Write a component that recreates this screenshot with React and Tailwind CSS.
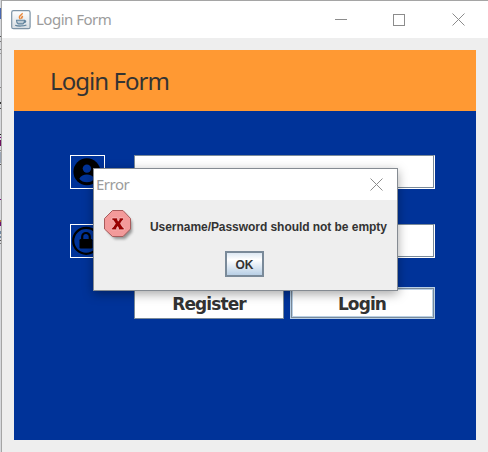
import React from "react";

const Cross = () => (
  <svg width="13" height="13" viewBox="0 0 13 13" className="block">
    <path d="M.5 .5l12 12M12.5 .5l-12 12" stroke="#8c8c8c" strokeWidth="1" fill="none" />
  </svg>
);

const JavaIcon = () => (
  <svg width="20" height="20" viewBox="0 0 20 20" className="block">
    <defs>
      <linearGradient id="tile" x1="0" y1="0" x2="0" y2="1">
        <stop offset="0" stopColor="#fff" />
        <stop offset="1" stopColor="#d5dce2" />
      </linearGradient>
    </defs>
    <rect x=".7" y=".7" width="18.4" height="18" rx="1.8" fill="url(#tile)" stroke="#7d93a5" strokeWidth="1.2" />
    <path d="M11.2 3c.4 2-3.200 2.400-2.800 4.400.1.700.8 1.100 1 1.900M12 6.200c-1.400.6-1.600 1.400-1.100 2.600" stroke="#e8883c" strokeWidth="1.500" fill="none" />
    <path d="M5.500 10.300h8c0 1.600-.6 3.200-1.500 3.600H7.300c-1.100-.6-1.800-2-1.800-3.600zM13.300 10.600c2-.4 2.100 1.800-.6 2.300M4.200 15.200c2.400 1.200 8.500 1.200 11.200-.2" stroke="#5f829b" strokeWidth="1.100" fill="#a3b8c7" fillOpacity=".6" />
  </svg>
);

const UserIcon = () => (
  <svg width="33" height="32" viewBox="0 0 33 32" className="block">
    <circle cx="15.900" cy="15.800" r="13.500" fill="#000" />
    <circle cx="15.900" cy="12.600" r="4.200" fill="#003399" />
    <path d="M8.300 22.700c1.500-3 4.500-4.200 7.600-4.200s6.100 1.200 7.600 4.200c-1.700 2.300-4.500 3.600-7.600 3.600s-5.900-1.300-7.600-3.600z" fill="#003399" />
  </svg>
);

const LockIcon = () => (
  <svg width="33" height="32" viewBox="0 0 33 32" className="block">
    <circle cx="15.200" cy="15.800" r="13" fill="none" stroke="#000" strokeWidth="2.200" />
    <rect x="8.500" y="14" width="13" height="9.500" rx="1.200" fill="#000" />
    <path d="M11.200 14.500v-2.700a3.800 3.800 0 0 1 7.600 0v2.700" fill="none" stroke="#000" strokeWidth="2.200" />
  </svg>
);

const Field = () => (
  <div className="h-[34px] w-[301px] border border-t-[#7a8a99] border-l-[#7a8a99] border-r-white border-b-white">
    <div className="h-full border-r border-b border-[#7a8a99] bg-white" />
  </div>
);

const ErrorIcon = () => (
  <svg width="36" height="36" viewBox="0 0 36 36" className="block">
    <path d="M11 5h11l7 8v10l-7 7H12l-7-7z" fill="#000" opacity=".4" className="blur-[1.5px]" />
    <path d="M9.500 1.500h10.500l7.500 8v10.500l-7.500 7.500H9.500l-8-7.500V9.500z" fill="#f39a9a" stroke="#a85c5c" />
    <path d="M9 9h5.500v1.800l.8 1.400.9-1.400V9H20.500v2.300h-1l-2.100 3.200 2.500 3.900H21v2.400h-5.500V19l-.9-1.500-1 1.500v1.800H8.700v-2.400h1.200l2.500-3.800-2.100-3.300H9z" fill="#980000" stroke="#ffd0d0" strokeWidth=".6" />
  </svg>
);

// Slivers of the window behind, visible along the left edge: [gap above, height, colour]
const slivers = [
  [8, 11, "#4a68b0"],
  [17, 1, "#555555"],
  [4, 1, "#777777"],
  [7, 1, "#777777"],
  [3, 1, "#999999"],
  [33, 1, "#888888"],
  [14, 2, "#333333"],
  [4, 1, "#555555"],
  [25, 1, "#222222"],
  [2, 1, "#800080"],
  [2, 6, "#701060"],
  [4, 1, "#888888"],
  [1, 11, "#9aa5b5"],
  [1, 1, "#555555"],
  [34, 1, "#800080"],
  [20, 2, "#b07030"],
  [0, 4, "#701070"],
  [5, 3, "#7088a0"],
  [2, 2, "#7088a0"],
  [2, 1, "#555555"],
  [2, 1, "#777777"],
];

export default function App() {
  return (
    <div className="relative flex h-[452px] w-[488px] overflow-hidden bg-[#d6d8dc]">
      <div className="w-px shrink-0">
        {slivers.map(([gap, height, color], i) => (
          <div key={i} style={{ marginTop: gap, height, backgroundColor: color }} />
        ))}
      </div>
      <div className="flex w-[487px] flex-col border-t border-l border-[#a5a5a5] bg-[#eeeeee]">
        <div className="flex h-[37px] shrink-0 items-center bg-white pl-[9px]">
          <JavaIcon />
          <span className="ml-[5px] font-['Noto_Sans',sans-serif] text-[15px] tracking-[-0.5px] text-[#9c9c9c]">Login Form</span>
          <div className="mr-[22px] ml-auto flex items-center">
            <div className="mr-[46px] mb-px h-px w-3 bg-[#8c8c8c]" />
            <div className="mr-[47px] size-3 border border-[#8c8c8c]" />
            <div className="pr-px"><Cross /></div>
          </div>
        </div>
        <div className="mt-3 ml-3 h-[390px] w-[462px] bg-[#003399]">
          <div className="flex h-[61px] items-center bg-[#ff9933] pt-px pl-9">
            <h1 className="font-['Noto_Sans',sans-serif] text-[24px] tracking-[-0.95px] text-[#333]">Login Form</h1>
          </div>
          <div className="pt-11 pl-14">
            <div className="flex gap-[29px]">
              <div className="w-[35px] border border-white"><UserIcon /></div>
              <Field />
            </div>
            <div className="mt-[35px] flex gap-[29px]">
              <div className="w-[35px] border border-white"><LockIcon /></div>
              <Field />
            </div>
            <div className="mt-[29px] ml-16 flex gap-1.5 font-['DejaVu_Sans',sans-serif] text-[17px] font-bold tracking-[-0.9px] text-[#333]">
              <button className="h-8 w-[150px] border border-[#7a8a99] bg-white pt-0.5 leading-[26px]">Register</button>
              <div className="border border-[#b8cfe5]">
                <button className="h-[30px] w-[143px] border border-[#7a8a99] bg-white pt-0.5 pr-px leading-[26px] shadow-[inset_0_0_0_1px_#b8cfe5]">Login</button>
              </div>
            </div>
          </div>
        </div>
      </div>

      <div className="absolute top-[168px] left-[93px] flex h-[123px] w-[305px] flex-col border border-[#858b92] bg-[#eeeeee] shadow-[0_3px_10px_rgba(0,0,0,0.35)]">
        <div className="flex h-[31px] shrink-0 items-center justify-between bg-white pr-[14px] pl-0.5">
          <span className="font-['Noto_Sans',sans-serif] text-[15px] tracking-[-0.5px] text-[#9c9c9c]">Error</span>
          <Cross />
        </div>
        <div className="flex h-[50px] pt-[9px] pl-[9px]">
          <ErrorIcon />
          <p className="mt-[10px] ml-[11px] font-['Liberation_Sans',sans-serif] text-[12px] leading-4 font-bold tracking-[-0.05px] whitespace-nowrap text-[#333]">Username/Password should not be empty</p>
        </div>
        <button className="mt-px ml-[131px] h-[26px] w-[39px] border-2 border-[#7a8a99] bg-linear-to-b from-[#dde8f3] via-white via-30% to-[#b8cfe5] pt-px font-['Liberation_Sans',sans-serif] text-[12px] leading-[22px] font-bold text-[#333]">OK</button>
      </div>
    </div>
  );
}
